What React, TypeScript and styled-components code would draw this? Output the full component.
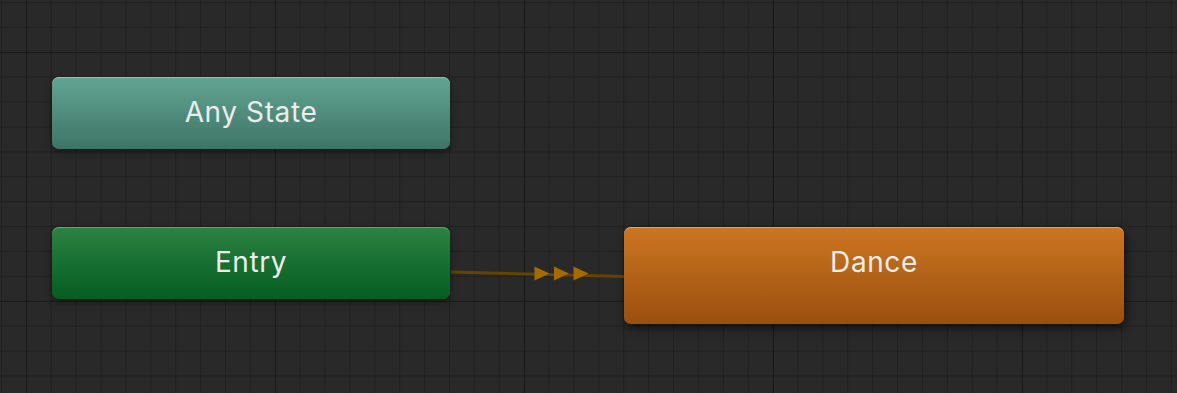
import React from "react";
import styled, { createGlobalStyle } from "styled-components";

const GlobalStyle = createGlobalStyle`
  html, body {
    margin: 0;
    padding: 0;
    background: #292929;
  }
  #root {
    width: 100vw;
    height: 100vh;
  }
`;

type Kind = "any" | "entry" | "state";

const palette: Record<Kind, { top: string; bottom: string; edge: string }> = {
  any: { top: "#62a592", bottom: "#3e7466", edge: "#8cc4b3" },
  entry: { top: "#2c8243", bottom: "#055d21", edge: "#5da872" },
  state: { top: "#cc7622", bottom: "#9a500e", edge: "#e6a060" },
};

const Canvas = styled.div`
  position: relative;
  width: 100%;
  height: 100%;
  overflow: hidden;
  background-color: #292929;
  background-image: linear-gradient(to right, #1a1a1a 1px, transparent 1px),
    linear-gradient(to bottom, #1a1a1a 1px, transparent 1px),
    linear-gradient(to right, #212121 1px, transparent 1px),
    linear-gradient(to bottom, #212121 1px, transparent 1px);
  background-size: 249px 249px, 249px 249px, 24.9px 24.9px, 24.9px 24.9px;
  background-position: 275px 52px, 275px 52px, 1px 2px, 1px 2px;
  font-family: Inter, "Noto Sans", sans-serif;
`;

const Node = styled.div<{ $kind: Kind; $x: number; $y: number; $w: number; $h: number }>`
  position: absolute;
  left: ${(p) => p.$x}px;
  top: ${(p) => p.$y}px;
  width: ${(p) => p.$w}px;
  height: ${(p) => p.$h}px;
  box-sizing: border-box;
  border-radius: 7px;
  background: linear-gradient(
    to bottom,
    ${(p) => palette[p.$kind].top},
    ${(p) => palette[p.$kind].bottom}
  );
  box-shadow: inset 0 1px 0 ${(p) => palette[p.$kind].edge},
    ${(p) =>
      p.$kind === "state"
        ? "2px 4px 10px rgba(0, 0, 0, 0.6)"
        : "0 3px 7px rgba(0, 0, 0, 0.4)"};
  display: flex;
  justify-content: center;
`;

const Label = styled.div`
  height: 70px;
  display: flex;
  align-items: center;
  color: #ececec;
  font-size: 28px;
  letter-spacing: 0.6px;
`;

const Link = styled.svg`
  position: absolute;
  left: 0;
  top: 0;
  overflow: visible;
`;

const Arrow = ({ x }: { x: number }) => (
  <polygon points={`${x},266.5 ${x + 15},273.5 ${x},280.5`} fill="#a36b00" />
);

export default function App() {
  return (
    <>
      <GlobalStyle />
      <Canvas>
        <Link width="1177" height="393">
          <line x1="451" y1="272" x2="625" y2="276.5" stroke="#634400" strokeWidth="3" />
          <Arrow x={534.5} />
          <Arrow x={554} />
          <Arrow x={573.5} />
        </Link>
        <Node $kind="any" $x={52} $y={77} $w={398} $h={72}>
          <Label>Any State</Label>
        </Node>
        <Node $kind="entry" $x={52} $y={227} $w={398} $h={72}>
          <Label>Entry</Label>
        </Node>
        <Node $kind="state" $x={624} $y={227} $w={500} $h={97}>
          <Label>Dance</Label>
        </Node>
      </Canvas>
    </>
  );
}
